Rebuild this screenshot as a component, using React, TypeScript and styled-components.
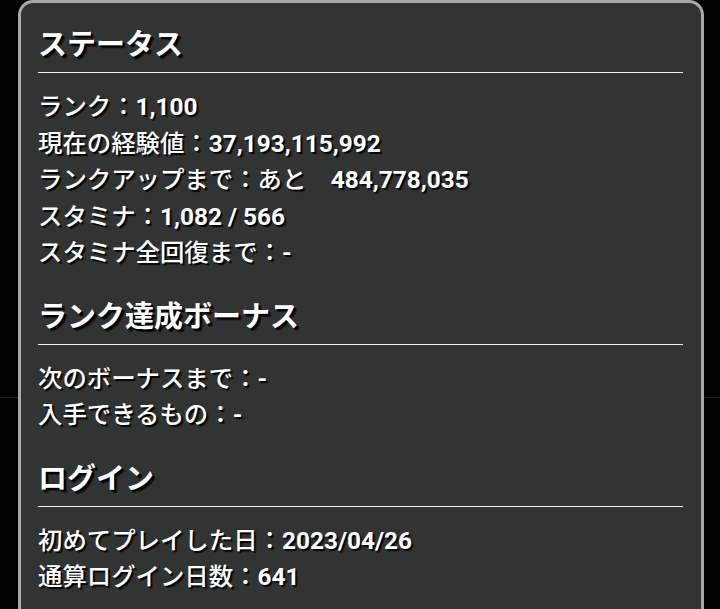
import React from 'react';
import styled, { createGlobalStyle } from 'styled-components';

type Row = { label: string; value: string };
type Section = { title: string; rows: Row[] };

const sections: Section[] = [
    {
        title: 'ステータス',
        rows: [
            { label: 'ランク：', value: '1,100' },
            { label: '現在の経験値：', value: '37,193,115,992' },
            { label: 'ランクアップまで：あと　', value: '484,778,035' },
            { label: 'スタミナ：', value: '1,082 / 566' },
            { label: 'スタミナ全回復まで：', value: '-' },
        ],
    },
    {
        title: 'ランク達成ボーナス',
        rows: [
            { label: '次のボーナスまで：', value: '-' },
            { label: '入手できるもの：', value: '-' },
        ],
    },
    {
        title: 'ログイン',
        rows: [
            { label: '初めてプレイした日：', value: '2023/04/26' },
            { label: '通算ログイン日数：', value: '641' },
        ],
    },
];

function App() {
    return <>
        <GlobalStyle />
        <Panel>
            {sections.map((section) => (
                <Block key={section.title}>
                    <Heading>{section.title}</Heading>
                    <Divider />
                    <RowList>
                        {section.rows.map((row) => (
                            <Line key={row.label}>
                                {row.label}
                                <Value>{row.value}</Value>
                            </Line>
                        ))}
                    </RowList>
                </Block>
            ))}
        </Panel>
    </>;
}

const GlobalStyle = createGlobalStyle`
    html, body, #root {
        margin: 0;
        padding: 0;
        height: 100%;
    }

    body {
        background:
            linear-gradient(to bottom, transparent 397px, #1b1b1b 397px, #1b1b1b 398px, transparent 398px),
            #000;
        overflow: hidden;
        font-family: "Roboto", "Noto Sans CJK JP", sans-serif;
        color: #fff;
    }
`;

const Panel = styled.div`
    box-sizing: border-box;
    width: 686px;
    height: 100%;
    margin-left: 18px;
    padding: 22px 18px 0 17px;

    background: #323333;
    border: 3px solid #a9a9a9;
    border-bottom: none;
    border-radius: 15px 15px 0 0;

    display: flex;
    flex-direction: column;
    gap: 25px;
`;

const Block = styled.section`
    display: flex;
    flex-direction: column;
`;

const Heading = styled.h2`
    margin: 0;
    height: 40px;
    line-height: 40px;
    font-size: 29px;
    font-weight: 700;
    text-shadow: 2px 2px 0 #000, 3px 3px 1px rgba(0, 0, 0, 0.6);
`;

const Divider = styled.hr`
    margin: 7px 0 16px;
    border: none;
    height: 1px;
    background: #f0f0f0;
`;

const RowList = styled.div`
    display: flex;
    flex-direction: column;
`;

const Line = styled.div`
    height: 36.5px;
    line-height: 36.5px;
    font-size: 24.4px;
    font-weight: 500;
    white-space: pre;
    text-shadow: 2px 2px 1px rgba(0, 0, 0, 0.9);
`;

const Value = styled.span`
    font-family: "Roboto", sans-serif;
    font-weight: 700;
`;

export default App;
